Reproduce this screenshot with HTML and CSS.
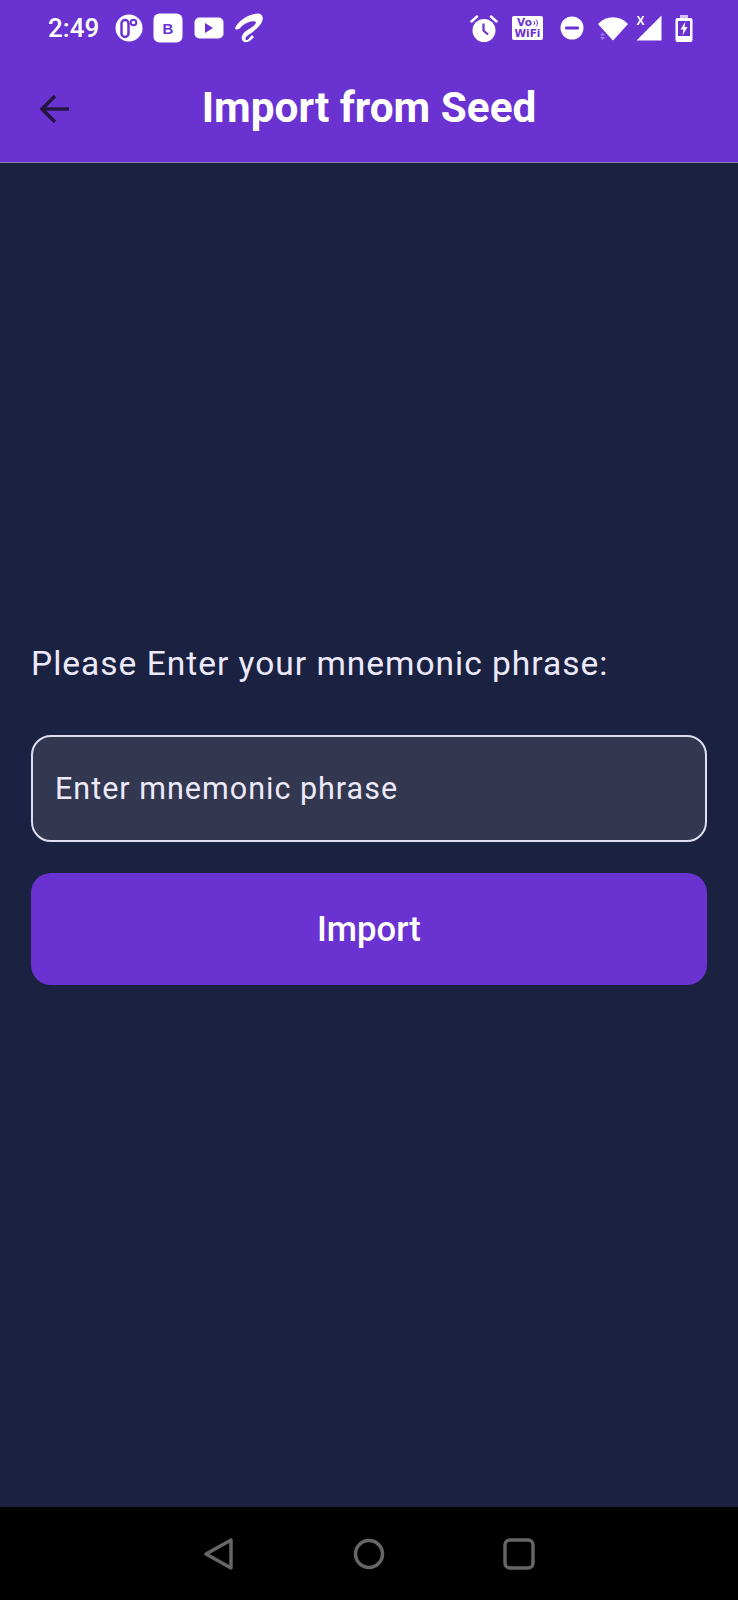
FILE: index.html
```html
<!DOCTYPE html>
<html lang="en">
<head>
    <meta charset="utf-8" />
    <meta name="viewport" content="width=device-width, initial-scale=1" />
    <title>Import from Seed</title>
    <link rel="stylesheet" href="styles.css">
</head>
<body>
    <div id="screen">
        <header id="app-header">
            <div id="status-bar">
                <div class="status-group">
                    <span id="clock">2:49</span>
                    <svg class="icon-left" width="28" height="28" viewBox="0 0 28 28">
                        <circle cx="14" cy="14" r="13.500" fill="#fff"/>
                        <rect x="6.500" y="6" width="7" height="17" rx="3.500" fill="#fff" stroke="#6b32d2" stroke-width="2.500"/>
                        <circle cx="18.500" cy="8.500" r="2.800" fill="#fff" stroke="#6b32d2" stroke-width="2"/>
                    </svg>
                    <svg class="icon-left-wide" width="30" height="30" viewBox="0 0 30 30">
                        <rect x="0.500" y="0.500" width="29" height="29" rx="6" fill="#fff"/>
                        <text x="15" y="21" text-anchor="middle" class="glyph-b">B</text>
                    </svg>
                    <svg class="icon-left" width="30" height="22" viewBox="0 0 30 22">
                        <rect x="0.500" y="0.500" width="29" height="21" rx="5" fill="#fff"/>
                        <path d="M11 6 L19 11 L11 16 Z" fill="#6b32d2"/>
                    </svg>
                    <svg width="30" height="30" viewBox="0 0 30 30">
                        <path fill="#fff" d="M1 15 C4 8 14 1 24 0.500 C30 1 30 7 26 12 C22 17 17 20 13 23 C10 26 12 28 14 26.500 L18 22 L20 24 C16 28.500 12 30.500 9.500 28.500 C6 26 8 21 12 18 C16 15 21 13 22 9.500 C22 7 13 8 8 13 C6 16 2 18 1 15 Z"/>
                    </svg>
                </div>
                <div class="status-group">
                    <svg class="icon-alarm" width="28" height="28" viewBox="0 0 28 28">
                        <circle cx="14" cy="16.500" r="11.500" fill="#fff"/>
                        <path d="M13.500 9.500 V16.500 L18 20.500" fill="none" stroke="#6b32d2" stroke-width="2.200"/>
                        <path d="M1.500 7.500 L7 2.500 M26.500 7.500 L21 2.500" stroke="#fff" stroke-width="2.500" stroke-linecap="round"/>
                    </svg>
                    <div id="vowifi">
                        <div class="vo-row">
                            <span>Vo</span>
                            <svg width="5" height="8" viewBox="0 0 5 8" fill="none" stroke="#6b32d2" stroke-width="1">
                                <path d="M0.500 2 C2 3 2 5 0.500 6 M3 0.500 C5 2.500 5 5.500 3 7.500"/>
                            </svg>
                        </div>
                        <span>WiFi</span>
                    </div>
                    <svg class="icon-dnd" width="24" height="24" viewBox="0 0 24 24">
                        <circle cx="12" cy="12" r="11.500" fill="#fff"/>
                        <rect x="5" y="10.500" width="14" height="3" rx="1" fill="#6b32d2"/>
                    </svg>
                    <svg class="icon-wifi" width="30" height="25" viewBox="0 0 30 25">
                        <path d="M1 8 C9 0 21 0 29 8 L15 23.500 Z" fill="#fff" stroke="#fff" stroke-width="1.500" stroke-linejoin="round"/>
                        <path d="M2 19.500 L4.500 16.500 L7 19.500 Z M2 21 L4.500 24 L7 21 Z" fill="#9a78df"/>
                    </svg>
                    <svg class="icon-signal" width="26" height="26" viewBox="0 0 26 26">
                        <path d="M25.500 0.500 V25.500 H0.500 Z" fill="#fff"/>
                        <text x="4.500" y="10" text-anchor="middle" class="glyph-x">X</text>
                    </svg>
                    <svg width="18" height="27" viewBox="0 0 18 27">
                        <rect x="5" y="0" width="8" height="3" fill="#fff" opacity="0.700"/>
                        <rect x="0.500" y="3" width="17" height="24" rx="2" fill="#fff"/>
                        <rect x="3" y="6" width="12" height="15" fill="#6b32d2"/>
                        <path d="M10.500 6.500 L5.500 14.500 H8.500 L7.500 20.500 L12.500 12 H9.500 Z" fill="#fff"/>
                    </svg>
                </div>
            </div>
            <div id="title-bar">
                <svg id="back-arrow" width="30" height="30" viewBox="0 0 30 30" fill="none" stroke="#23163f" stroke-width="3.400">
                    <path d="M30 15 H3"/>
                    <path d="M16 2 L3 15 L16 28"/>
                </svg>
                <h1>Import from Seed</h1>
            </div>
        </header>

        <main id="import-content">
            <label id="phrase-label" for="phrase-input">Please Enter your mnemonic phrase:</label>
            <input id="phrase-input" type="text" placeholder="Enter mnemonic phrase">
            <button id="import-btn" type="button">Import</button>
        </main>

        <nav id="system-nav">
            <svg width="32" height="32" viewBox="0 0 32 32" fill="none" stroke="#666" stroke-width="3.500" stroke-linejoin="round">
                <path d="M28 2 V30 L3 16 Z"/>
            </svg>
            <svg width="32" height="32" viewBox="0 0 32 32" fill="none" stroke="#666" stroke-width="3.500">
                <circle cx="16" cy="16" r="13.500"/>
            </svg>
            <svg width="32" height="32" viewBox="0 0 32 32" fill="none" stroke="#666" stroke-width="3.500">
                <rect x="2" y="2" width="28" height="28" rx="5"/>
            </svg>
        </nav>
    </div>
</body>
</html>
```

FILE: styles.css
```css
body {
    font-family: Roboto, 'Liberation Sans', sans-serif;
    background-color: #1b2140;
    margin: 0;
    padding: 0;
}

#screen {
    display: flex;
    flex-direction: column;
    height: 1600px;
}

#app-header {
    background-color: #6b32d2;
    border-bottom: 1px solid #8a7fb5;
    height: 163px;
    box-sizing: border-box;
    flex-shrink: 0;
}

#status-bar {
    display: flex;
    justify-content: space-between;
    align-items: center;
    height: 56px;
    padding: 0 45px 0 48px;
}

.status-group {
    display: flex;
    align-items: center;
}

#clock {
    color: #fff;
    font-size: 26px;
    font-weight: 500;
    margin-right: 16px;
}

.icon-left {
    margin-right: 10px;
}

.icon-left-wide {
    margin-right: 11px;
}

.icon-alarm {
    margin-right: 14px;
}

.icon-dnd {
    margin-right: 14px;
}

.icon-wifi {
    margin-right: 8px;
}

.icon-signal {
    margin-right: 13px;
}

.glyph-b {
    font-family: 'Liberation Sans', sans-serif;
    font-size: 15px;
    font-weight: 700;
    fill: #6b32d2;
}

.glyph-x {
    font-family: 'Liberation Sans', sans-serif;
    font-size: 12px;
    font-weight: 700;
    fill: #fff;
}

#vowifi {
    display: flex;
    flex-direction: column;
    align-items: center;
    justify-content: center;
    width: 31px;
    height: 24px;
    margin-right: 17px;
    background-color: #fff;
    border-radius: 2px;
    color: #6b32d2;
    font-family: 'DejaVu Sans', sans-serif;
    font-size: 10.500px;
    font-weight: 700;
    line-height: 11px;
}

.vo-row {
    display: flex;
    align-items: center;
    gap: 1px;
}

#title-bar {
    position: relative;
    display: flex;
    justify-content: center;
    align-items: center;
    height: 103px;
}

#back-arrow {
    position: absolute;
    left: 39px;
    top: 38px;
}

h1 {
    color: #fff;
    font-size: 42.300px;
    font-weight: 700;
    margin: 0;
}

#import-content {
    flex: 1;
    display: flex;
    flex-direction: column;
    justify-content: center;
    padding: 0 31px 42px;
}

#phrase-label {
    color: #eceafa;
    font-size: 33.500px;
    letter-spacing: 1px;
    line-height: 40px;
    margin-bottom: 51px;
}

#phrase-input {
    height: 107px;
    box-sizing: border-box;
    padding: 0 22px;
    background-color: #33374f;
    border: 2px solid #dfdef0;
    border-radius: 20px;
    color: #eceafa;
    font-family: inherit;
    font-size: 30.500px;
    letter-spacing: 1px;
    margin-bottom: 31px;
}

#phrase-input::placeholder {
    color: #eceafa;
    opacity: 1;
}

#import-btn {
    height: 112px;
    background-color: #6b32d2;
    color: #fff;
    border: none;
    border-radius: 20px;
    font-family: inherit;
    font-size: 34.700px;
    font-weight: 500;
}

#system-nav {
    display: flex;
    justify-content: center;
    align-items: center;
    gap: 118px;
    height: 93px;
    background-color: #000;
    flex-shrink: 0;
}
```
